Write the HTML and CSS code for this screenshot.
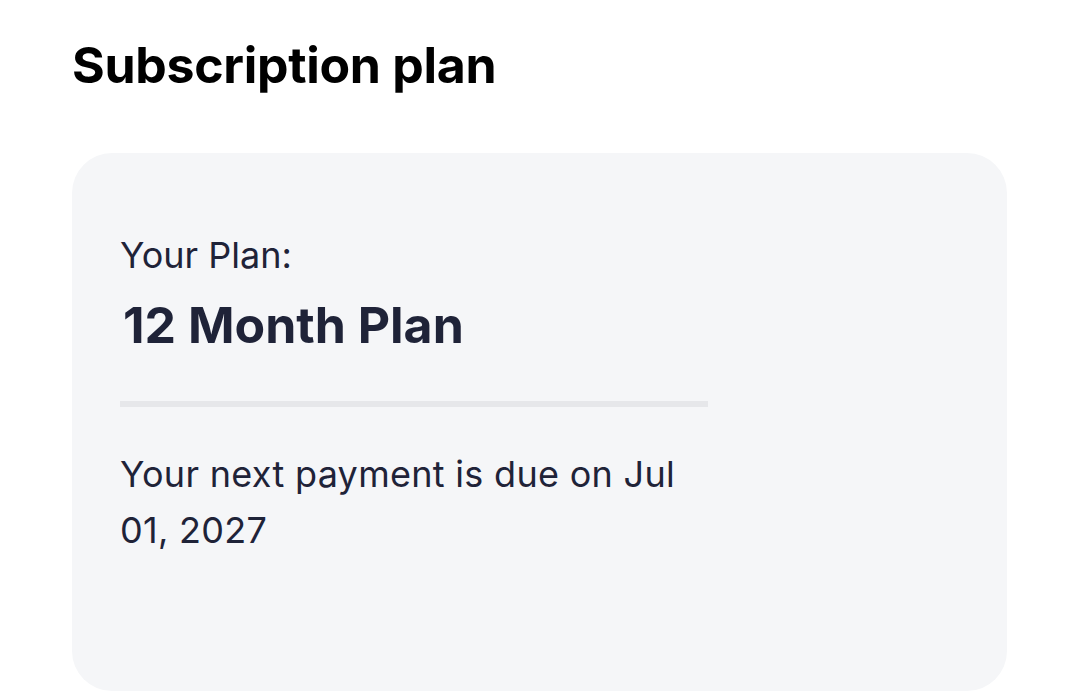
FILE: index.html
```html
<!DOCTYPE html>
<html lang="en">
<head>
    <meta charset="UTF-8">
    <meta name="viewport" content="width=device-width, initial-scale=1.0">
    <title>Subscription plan</title>
    <link rel="stylesheet" href="styles.css">
</head>
<body>
    <!-- Page wrapper -->
    <main class="page">
        <h1 class="page-title">Subscription plan</h1>

        <!-- Current plan card -->
        <section class="plan-card">
            <div class="plan-info">
                <div class="plan-label">Your Plan:</div>
                <div class="plan-name">12 Month Plan</div>
                <hr class="plan-divider">
                <p class="plan-next">Your next payment is due on Jul 01, 2027</p>
            </div>
        </section>
    </main>
</body>
</html>
```

FILE: styles.css
```css
/* Basic page reset */
body {
    margin: 0;
    background-color: #ffffff;
    font-family: 'Inter', 'Roboto', sans-serif;
}

.page {
    padding: 32px 73px 0 72px;
}

/* Heading */
.page-title {
    margin: 0;
    font-size: 50px;
    font-weight: 700;
    line-height: 66px;
    color: #000000;
    letter-spacing: -0.3px;
}

/* Plan card */
.plan-card {
    margin-top: 55px;
    height: 538px;
    box-sizing: border-box;
    padding: 78px 48px 0 48px;
    background-color: #f5f6f8;
    border-radius: 40px;
}

.plan-info {
    width: 588px;
    color: #1f2338;
}

.plan-label {
    font-size: 36px;
    line-height: 48px;
}

.plan-name {
    margin-top: 18px;
    font-size: 50px;
    font-weight: 700;
    line-height: 56px;
    padding-left: 3px;
}

.plan-divider {
    margin: 48px 0 0;
    height: 6px;
    border: none;
    background-color: #e6e7ea;
}

.plan-next {
    margin: 39px 0 0;
    font-size: 36px;
    line-height: 56px;
    letter-spacing: 0.3px;
}
```
